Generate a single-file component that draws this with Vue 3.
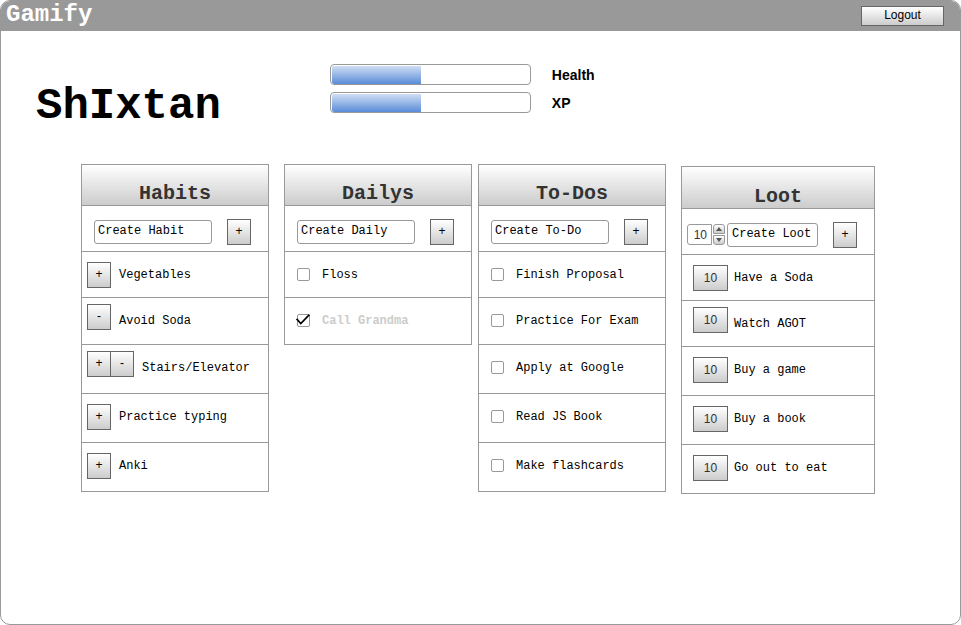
<script setup>
import { reactive, ref } from 'vue'

const stats = [
  { id: 'health', label: 'Health', value: 45 },
  { id: 'xp', label: 'XP', value: 45 },
]

const habits = [
  { name: 'Vegetables', actions: ['+'] },
  { name: 'Avoid Soda', actions: ['-'], raised: true },
  { name: 'Stairs/Elevator', actions: ['+', '-'], raised: true },
  { name: 'Practice typing', actions: ['+'] },
  { name: 'Anki', actions: ['+'] },
]

const checklists = reactive([
  {
    id: 'daily',
    title: 'Dailys',
    draft: 'Create Daily',
    items: [
      { name: 'Floss', done: false },
      { name: 'Call Grandma', done: true },
    ],
  },
  {
    id: 'todo',
    title: 'To-Dos',
    draft: 'Create To-Do',
    items: [
      { name: 'Finish Proposal', done: false },
      { name: 'Practice For Exam', done: false },
      { name: 'Apply at Google', done: false },
      { name: 'Read JS Book', done: false },
      { name: 'Make flashcards', done: false },
    ],
  },
])

const rewards = [
  { name: 'Have a Soda', cost: 10 },
  { name: 'Watch AGOT', cost: 10, raised: true },
  { name: 'Buy a game', cost: 10 },
  { name: 'Buy a book', cost: 10 },
  { name: 'Go out to eat', cost: 10 },
]

const habitDraft = ref('Create Habit')
const lootDraft = ref('Create Loot')
const lootCost = ref(10)
</script>

<template>
  <div class="window">
    <header class="topbar">
      <span class="brand">Gamify</span>
      <button type="button" class="btn logout">Logout</button>
    </header>

    <main>
      <section class="hero">
        <h1 class="player">ShIxtan</h1>
        <div class="stats">
          <div v-for="s in stats" :key="s.id" class="stat">
            <div class="bar" role="progressbar" :aria-labelledby="s.id" :aria-valuenow="s.value">
              <div class="fill" :style="{ width: s.value + '%' }"></div>
            </div>
            <span :id="s.id" class="stat-label">{{ s.label }}</span>
          </div>
        </div>
      </section>

      <div class="board">
        <section class="panel">
          <h2 class="head">Habits</h2>
          <form class="create" @submit.prevent>
            <input v-model="habitDraft" class="field" type="text" aria-label="New habit" />
            <button class="btn square" type="submit">+</button>
          </form>
          <ul class="list habits">
            <li v-for="h in habits" :key="h.name">
              <div class="actions" :class="{ raised: h.raised }">
                <button v-for="a in h.actions" :key="a" type="button" class="btn square">{{ a }}</button>
              </div>
              <span class="name">{{ h.name }}</span>
            </li>
          </ul>
        </section>

        <div class="pair">
          <section v-for="c in checklists" :key="c.id" class="panel">
            <h2 class="head">{{ c.title }}</h2>
            <form class="create" @submit.prevent>
              <input v-model="c.draft" class="field" type="text" :aria-label="'New ' + c.id" />
              <button class="btn square" type="submit">+</button>
            </form>
            <ul class="list checks">
              <li v-for="(item, i) in c.items" :key="item.name">
                <span class="tick">
                  <input :id="c.id + i" v-model="item.done" type="checkbox" />
                  <svg v-if="item.done" viewBox="0 0 15 13" width="15" height="13" aria-hidden="true">
                    <path d="M0.6 4.8 L4.8 9.6 L13.4 0.6" />
                  </svg>
                </span>
                <label :for="c.id + i" class="name" :class="{ done: item.done }">{{ item.name }}</label>
              </li>
            </ul>
          </section>
        </div>

        <section class="panel loot">
          <h2 class="head">Loot</h2>
          <form class="create" @submit.prevent>
            <div class="stepper">
              <input v-model.number="lootCost" class="cost" type="text" aria-label="Cost" />
              <div class="arrows">
                <button type="button" aria-label="Increase" @click="lootCost++">
                  <svg viewBox="0 0 6 4" width="6" height="4"><path d="M0 4 L3 0 L6 4 Z" /></svg>
                </button>
                <button type="button" aria-label="Decrease" @click="lootCost--">
                  <svg viewBox="0 0 6 4" width="6" height="4"><path d="M0 0 L3 4 L6 0 Z" /></svg>
                </button>
              </div>
            </div>
            <input v-model="lootDraft" class="field" type="text" aria-label="New loot" />
            <button class="btn square" type="submit">+</button>
          </form>
          <ul class="list rewards">
            <li v-for="r in rewards" :key="r.name">
              <button type="button" class="btn price" :class="{ raised: r.raised }">{{ r.cost }}</button>
              <span class="name">{{ r.name }}</span>
            </li>
          </ul>
        </section>
      </div>
    </main>
  </div>
</template>

<style>
body {
  background: #fff;
}
</style>

<style scoped>
.window,
.window * {
  box-sizing: border-box;
}

.window {
  min-height: 100vh;
  border: 1px solid #999;
  border-radius: 10px;
  overflow: hidden;
  background: #fff;
  color: #000;
  font-family: "Courier New", Courier, "Liberation Mono", monospace;
  font-size: 12px;
}

h1,
h2,
ul {
  margin: 0;
  padding: 0;
}

.topbar {
  display: flex;
  align-items: flex-start;
  justify-content: space-between;
  height: 30px;
  padding: 0 16px 0 5px;
  background: #999;
}

.brand {
  color: #fff;
  font-size: 24px;
  font-weight: bold;
  line-height: 28px;
}

.btn {
  flex: none;
  height: 26px;
  padding: 0 0 2px;
  border: 1px solid #666;
  border-radius: 0;
  background: linear-gradient(#fff, #ccc);
  color: #000;
  font: 12px "Liberation Sans", Arial, sans-serif;
}

.logout {
  width: 83px;
  height: 20px;
  margin-top: 5px;
}

.square {
  width: 24px;
}

.price {
  width: 35px;
  padding: 0;
  color: #333;
}

.hero {
  display: flex;
  gap: 109px;
  padding: 33px 35px 33px;
}

.player {
  margin-top: 17px;
  font-size: 44px;
  line-height: 50px;
}

.stats {
  display: flex;
  flex-direction: column;
  gap: 7px;
}

.stat {
  display: flex;
  align-items: center;
  gap: 21px;
  height: 21px;
}

.bar {
  width: 201px;
  height: 21px;
  padding-top: 1px;
  border: 1px solid #999;
  border-radius: 4px;
  overflow: hidden;
}

.fill {
  height: 100%;
  margin-left: 1px;
  border-radius: 2px 0 0 2px;
  background: linear-gradient(#d0def4, #5a8cd8);
}

.stat-label {
  font: bold 14px "Liberation Sans", Arial, sans-serif;
}

.board {
  display: grid;
  grid-template-columns: 188fr 382fr 194fr;
  align-items: start;
  gap: 15px;
  padding: 0 85px 0 80px;
}

.panel {
  min-width: 0;
  border: 1px solid #999;
}

.pair {
  display: grid;
  grid-template-columns: 1fr 1fr;
  align-items: start;
  gap: 6px;
  min-width: 0;
}

.loot {
  margin-top: 2px;
}

.head {
  display: flex;
  align-items: flex-end;
  justify-content: center;
  height: 41px;
  border-bottom: 1px solid #999;
  background: linear-gradient(#fff, #ccc);
  color: #333;
  font-size: 20px;
  line-height: 22px;
}

.loot .head {
  height: 42px;
}

.create {
  display: flex;
  align-items: center;
  gap: 15px;
  height: 45px;
  padding: 6px 17px 0 12px;
}

.field {
  flex: 1;
  width: 0;
  min-width: 0;
  height: 24px;
  padding: 0 3px 2px;
  border: 1px solid #999;
  border-radius: 3px;
  background: #fff;
  color: #000;
  font: inherit;
}

.loot .create {
  gap: 2px;
  padding-left: 5px;
}

.loot .field {
  padding: 0 4px 2px;
  margin-right: 13px;
}

.stepper {
  display: flex;
  align-items: center;
  gap: 1px;
}

.cost {
  width: 25px;
  height: 21px;
  padding: 0 4px 0 0;
  border: 1px solid #999;
  border-radius: 3px 0 0 3px;
  background: #fff;
  color: #333;
  font: 12px "Liberation Sans", Arial, sans-serif;
  text-align: right;
}

.arrows {
  display: flex;
  flex-direction: column;
  gap: 1px;
}

.arrows button {
  display: flex;
  align-items: center;
  justify-content: center;
  width: 12px;
  height: 10px;
  padding: 0;
  border: 1px solid #999;
  border-radius: 3px 3px 0 0;
  background: linear-gradient(#fff, #ccc);
}

.arrows button:last-child {
  border-radius: 0 0 3px 3px;
}

.arrows path {
  fill: #555;
}

.list {
  list-style: none;
}

.list li {
  display: flex;
  align-items: flex-start;
  height: 49px;
  padding-top: 10px;
  border-top: 1px solid #999;
}

.list li:first-child {
  height: 46px;
}

.list li:nth-child(2) {
  height: 47px;
}

.rewards li:nth-child(2) {
  height: 46px;
}

.habits li {
  gap: 8px;
  padding-left: 5px;
}

.checks li {
  gap: 12px;
  padding-left: 12px;
}

.rewards li {
  gap: 6px;
  padding-left: 11px;
}

.name {
  line-height: 26px;
  white-space: nowrap;
}

.done {
  color: #ccc;
  font-weight: bold;
}

.actions {
  display: flex;
}

.actions .btn + .btn {
  margin-left: -1px;
}

.raised {
  margin-top: -4px;
}

.tick {
  position: relative;
  display: flex;
  margin-top: 6px;
}

.tick input {
  appearance: none;
  width: 13px;
  height: 13px;
  margin: 0;
  border: 1px solid #999;
  border-radius: 2px;
  background: #fff;
}

.tick svg {
  position: absolute;
  top: 0;
  left: -1px;
  pointer-events: none;
}

.tick path {
  fill: none;
  stroke: #000;
  stroke-width: 1.7;
}
</style>
